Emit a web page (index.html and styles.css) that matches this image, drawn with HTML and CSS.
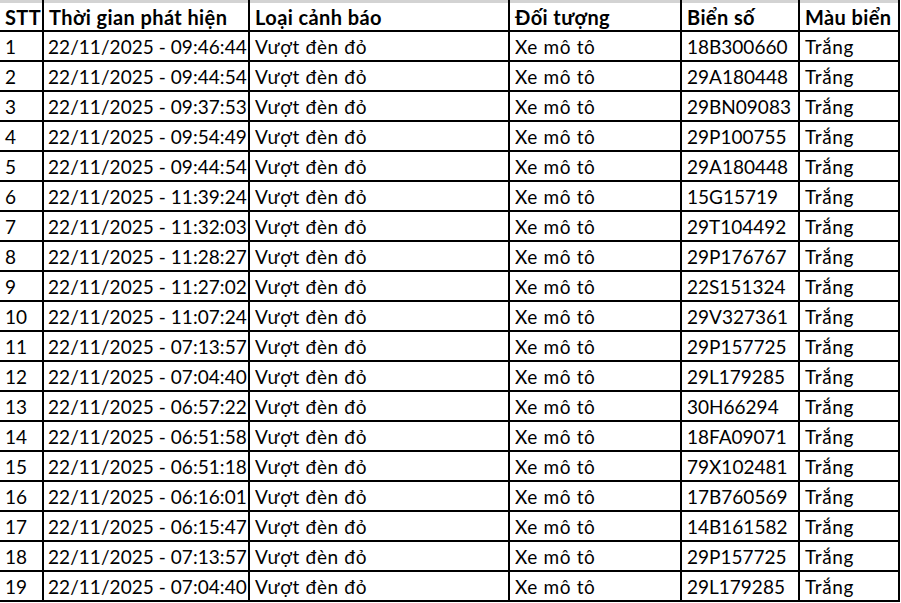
FILE: index.html
```html
<!DOCTYPE html>
<html lang="vi">
<head>
<meta charset="utf-8">
<link rel="stylesheet" href="styles.css">
</head>
<body>
<div class="sheet">
  <div class="cell head">STT</div>
  <div class="cell head">Thời gian phát hiện</div>
  <div class="cell head">Loại cảnh báo</div>
  <div class="cell head">Đối tượng</div>
  <div class="cell head">Biển số</div>
  <div class="cell head">Màu biển</div>

  <div class="cell">1</div><div class="cell time">22/11/2025 - 09:46:44</div><div class="cell word">Vượt đèn đỏ</div><div class="cell word">Xe mô tô</div><div class="cell">18B300660</div><div class="cell word">Trắng</div>
  <div class="cell">2</div><div class="cell time">22/11/2025 - 09:44:54</div><div class="cell word">Vượt đèn đỏ</div><div class="cell word">Xe mô tô</div><div class="cell">29A180448</div><div class="cell word">Trắng</div>
  <div class="cell">3</div><div class="cell time">22/11/2025 - 09:37:53</div><div class="cell word">Vượt đèn đỏ</div><div class="cell word">Xe mô tô</div><div class="cell">29BN09083</div><div class="cell word">Trắng</div>
  <div class="cell">4</div><div class="cell time">22/11/2025 - 09:54:49</div><div class="cell word">Vượt đèn đỏ</div><div class="cell word">Xe mô tô</div><div class="cell">29P100755</div><div class="cell word">Trắng</div>
  <div class="cell">5</div><div class="cell time">22/11/2025 - 09:44:54</div><div class="cell word">Vượt đèn đỏ</div><div class="cell word">Xe mô tô</div><div class="cell">29A180448</div><div class="cell word">Trắng</div>
  <div class="cell">6</div><div class="cell time">22/11/2025 - 11:39:24</div><div class="cell word">Vượt đèn đỏ</div><div class="cell word">Xe mô tô</div><div class="cell">15G15719</div><div class="cell word">Trắng</div>
  <div class="cell">7</div><div class="cell time">22/11/2025 - 11:32:03</div><div class="cell word">Vượt đèn đỏ</div><div class="cell word">Xe mô tô</div><div class="cell">29T104492</div><div class="cell word">Trắng</div>
  <div class="cell">8</div><div class="cell time">22/11/2025 - 11:28:27</div><div class="cell word">Vượt đèn đỏ</div><div class="cell word">Xe mô tô</div><div class="cell">29P176767</div><div class="cell word">Trắng</div>
  <div class="cell">9</div><div class="cell time">22/11/2025 - 11:27:02</div><div class="cell word">Vượt đèn đỏ</div><div class="cell word">Xe mô tô</div><div class="cell">22S151324</div><div class="cell word">Trắng</div>
  <div class="cell">10</div><div class="cell time">22/11/2025 - 11:07:24</div><div class="cell word">Vượt đèn đỏ</div><div class="cell word">Xe mô tô</div><div class="cell">29V327361</div><div class="cell word">Trắng</div>
  <div class="cell">11</div><div class="cell time">22/11/2025 - 07:13:57</div><div class="cell word">Vượt đèn đỏ</div><div class="cell word">Xe mô tô</div><div class="cell">29P157725</div><div class="cell word">Trắng</div>
  <div class="cell">12</div><div class="cell time">22/11/2025 - 07:04:40</div><div class="cell word">Vượt đèn đỏ</div><div class="cell word">Xe mô tô</div><div class="cell">29L179285</div><div class="cell word">Trắng</div>
  <div class="cell">13</div><div class="cell time">22/11/2025 - 06:57:22</div><div class="cell word">Vượt đèn đỏ</div><div class="cell word">Xe mô tô</div><div class="cell">30H66294</div><div class="cell word">Trắng</div>
  <div class="cell">14</div><div class="cell time">22/11/2025 - 06:51:58</div><div class="cell word">Vượt đèn đỏ</div><div class="cell word">Xe mô tô</div><div class="cell">18FA09071</div><div class="cell word">Trắng</div>
  <div class="cell">15</div><div class="cell time">22/11/2025 - 06:51:18</div><div class="cell word">Vượt đèn đỏ</div><div class="cell word">Xe mô tô</div><div class="cell">79X102481</div><div class="cell word">Trắng</div>
  <div class="cell">16</div><div class="cell time">22/11/2025 - 06:16:01</div><div class="cell word">Vượt đèn đỏ</div><div class="cell word">Xe mô tô</div><div class="cell">17B760569</div><div class="cell word">Trắng</div>
  <div class="cell">17</div><div class="cell time">22/11/2025 - 06:15:47</div><div class="cell word">Vượt đèn đỏ</div><div class="cell word">Xe mô tô</div><div class="cell">14B161582</div><div class="cell word">Trắng</div>
  <div class="cell">18</div><div class="cell time">22/11/2025 - 07:13:57</div><div class="cell word">Vượt đèn đỏ</div><div class="cell word">Xe mô tô</div><div class="cell">29P157725</div><div class="cell word">Trắng</div>
  <div class="cell">19</div><div class="cell time">22/11/2025 - 07:04:40</div><div class="cell word">Vượt đèn đỏ</div><div class="cell word">Xe mô tô</div><div class="cell">29L179285</div><div class="cell word">Trắng</div>
</div>
</body>
</html>
```

FILE: styles.css
```css
html, body {
  margin: 0;
  padding: 0;
  background: #ffffff;
}

.sheet {
  display: grid;
  grid-template-columns: 42px 204px 258px 170px 116px 98px;
  grid-template-rows: 30px repeat(19, 28px);
  gap: 2px;
  width: max-content;
  padding: 0 2px 2px 0;
  background: #000000;
  font-family: Lato, "Liberation Sans", sans-serif;
  font-size: 19px;
  color: #000000;
}

.cell {
  background: #ffffff;
  display: flex;
  align-items: center;
  padding-left: 5px;
  padding-top: 1px;
  white-space: nowrap;
  line-height: 1;
}

.time {
  padding-left: 4px;
  letter-spacing: 0.05px;
}

.word {
  letter-spacing: 0.65px;
}

.head {
  font-weight: 700;
  font-size: 20px;
  letter-spacing: 0.4px;
  padding-top: 0;
  border-top: 3px solid #d3d3d3;
}
```
